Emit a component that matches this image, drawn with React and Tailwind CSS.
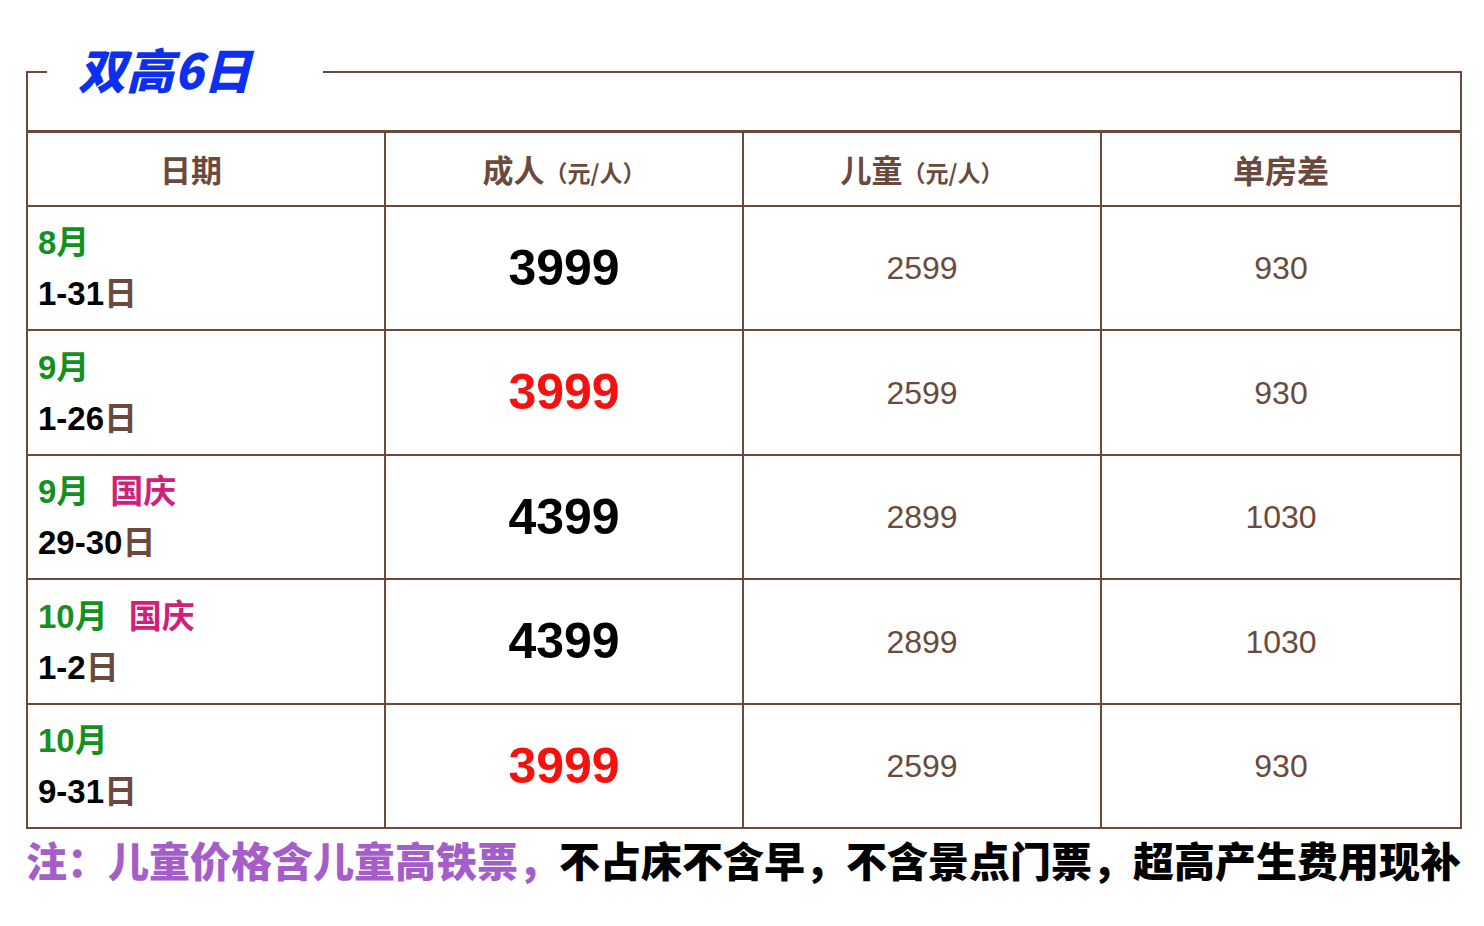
import React from 'react'

const BROWN = 'text-[#6a4a3c]'

const rows = [
  { month: '8月', tag: null, days: '1-31', adult: '3999', red: false, child: '2599', single: '930', h: 'h-[124px]' },
  { month: '9月', tag: null, days: '1-26', adult: '3999', red: true, child: '2599', single: '930', h: 'h-[125px]' },
  { month: '9月', tag: '国庆', days: '29-30', adult: '4399', red: false, child: '2899', single: '1030', h: 'h-[124px]' },
  { month: '10月', tag: '国庆', days: '1-2', adult: '4399', red: false, child: '2899', single: '1030', h: 'h-[125px]' },
  { month: '10月', tag: null, days: '9-31', adult: '3999', red: true, child: '2599', single: '930', h: 'h-[122px]', last: true },
]

const sans = "font-['Liberation_Sans','Noto_Sans_CJK_SC',sans-serif]"
const cjk = "font-['Noto_Sans_CJK_SC','Liberation_Sans',sans-serif]"

function Row({ r }) {
  const line = r.last ? '' : 'border-b-2'
  return (
    <>
      <div className={`${r.h} ${line} border-r-2 border-[#6a4a3c] flex flex-col justify-center pl-[10px] ${sans} font-bold text-[33px] leading-[51px]`}>
        <div className="whitespace-nowrap">
          <span className="text-[#13901e]">{r.month}</span>
          {r.tag && <span className="ml-[21px] text-[#d0217a]">{r.tag}</span>}
        </div>
        <div className="whitespace-nowrap text-black">
          {r.days}
          <span className={BROWN}>日</span>
        </div>
      </div>
      <div className={`${r.h} ${line} border-r-2 border-[#6a4a3c] flex items-center justify-center`}>
        <span className={`${sans} font-bold text-[50px] ${r.red ? 'text-[#f5120e]' : 'text-black'}`}>
          {r.adult}
        </span>
      </div>
      <div className={`${r.h} ${line} border-r-2 border-[#6a4a3c] flex items-center justify-center`}>
        <span className={`${sans} text-[32px] ${BROWN}`}>{r.child}</span>
      </div>
      <div className={`${r.h} ${line} border-[#6a4a3c] flex items-center justify-center`}>
        <span className={`${sans} text-[32px] ${BROWN}`}>{r.single}</span>
      </div>
    </>
  )
}

export default function App() {
  return (
    <div className="min-h-[926px] bg-white pt-[48px]">
      <fieldset className="ml-[26px] w-[1436px] m-0 p-0 border-2 border-[#6a4a3c]">
        <legend className={`ml-[19px] w-[276px] pl-[31px] leading-[48px] h-[48px] ${cjk} font-black italic text-[48px] text-[#0c2ff0]`}>
          <span className="relative top-[-4px]">双高6日</span>
        </legend>
        <div className="h-[34px]" />
        <div className="grid grid-cols-4 border-t-[3px] border-[#6a4a3c]">
          <div className={`h-[74px] border-b-2 border-r-2 border-[#6a4a3c] flex items-center justify-center pr-[30px] ${cjk} font-bold text-[31px] ${BROWN}`}>
            日期
          </div>
          <div className={`h-[74px] border-b-2 border-r-2 border-[#6a4a3c] flex items-center justify-center ${cjk} font-bold text-[31px] ${BROWN}`}>
            <span>成人<span className="text-[23px]">（元/人）</span></span>
          </div>
          <div className={`h-[74px] border-b-2 border-r-2 border-[#6a4a3c] flex items-center justify-center ${cjk} font-bold text-[31px] ${BROWN}`}>
            <span>儿童<span className="text-[23px]">（元/人）</span></span>
          </div>
          <div className={`h-[74px] border-b-2 border-[#6a4a3c] flex items-center justify-center ${cjk} font-bold text-[32px] ${BROWN}`}>
            单房差
          </div>
          {rows.map((r, i) => (
            <Row key={i} r={r} />
          ))}
        </div>
      </fieldset>
      <div className={`ml-[26px] mt-[6px] whitespace-nowrap ${cjk} font-black text-[41px] leading-[48px]`}>
        <span className="text-[#a55ec9]">注：儿童价格含儿童高铁票，</span>
        <span className="text-black">不占床不含早，不含景点门票，超高产生费用现补</span>
      </div>
    </div>
  )
}
